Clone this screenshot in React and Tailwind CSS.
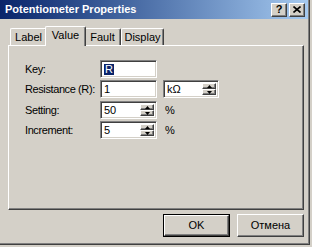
import React from 'react';

// Win2k-style "Potentiometer Properties" dialog

const raised =
  'border border-t-white border-l-white border-r-[#404040] border-b-[#404040] shadow-[inset_-1px_-1px_0_#808080,inset_1px_1px_0_#d4d0c8]';
const sunken =
  'border border-t-[#808080] border-l-[#808080] border-r-white border-b-white shadow-[inset_1px_1px_0_#404040,inset_-1px_-1px_0_#d4d0c8]';

function Arrow({ up }) {
  return (
    <svg width="5" height="3" viewBox="0 0 5 3" className="block">
      <path d={up ? 'M2.5 0 L5 3 L0 3 Z' : 'M0 0 L5 0 L2.5 3 Z'} fill="#000" />
    </svg>
  );
}

function Spinner() {
  return (
    <div className="flex h-full w-[14px] shrink-0 flex-col">
      <div className={`flex h-[7px] items-center justify-center bg-[#d4d0c8] ${raised}`}>
        <Arrow up />
      </div>
      <div className={`flex h-[7px] items-center justify-center bg-[#d4d0c8] ${raised}`}>
        <Arrow />
      </div>
    </div>
  );
}

function Field({ children, spin, className = '' }) {
  return (
    <div className={`flex h-[18px] items-stretch bg-white p-[2px] ${sunken} ${className}`}>
      <div className="flex flex-1 items-center pl-[1px] leading-none">{children}</div>
      {spin && <Spinner />}
    </div>
  );
}

function Row({ label, children, className = '' }) {
  return (
    <div className={`flex items-center ${className}`}>
      <span className="w-[75px] shrink-0 whitespace-nowrap tracking-[-0.4px]">{label}</span>
      {children}
    </div>
  );
}

const tabs = [
  { name: 'Label', w: 'w-[37px]' },
  { name: 'Value', w: 'w-[41px]', active: true },
  { name: 'Fault', w: 'w-[37px]' },
  { name: 'Display', w: 'w-[43px]' },
];

export default function App() {
  return (
    <div className="h-[247px] w-[312px] overflow-hidden bg-[#d4d0c8] font-['Liberation_Sans',Arial,sans-serif] text-[11px] text-black">
      <div className="flex h-[245px] w-[310px] flex-col border-r border-b border-[#404040] pr-[1px] shadow-[inset_-1px_-1px_0_#808080]">
        {/* title bar */}
        <div className="flex h-[19px] items-center bg-gradient-to-r from-[#0a246a] to-[#a6caf0] pl-[5px] pr-[3px]">
          <span className="flex-1 text-[11px] font-bold text-white">Potentiometer Properties</span>
          <div className={`flex h-[14px] w-[16px] items-center justify-center bg-[#d4d0c8] text-[11px] font-bold leading-none ${raised}`}>?</div>
          <div className={`ml-[2px] flex h-[14px] w-[16px] items-center justify-center bg-[#d4d0c8] ${raised}`}>
            <svg width="8" height="7" viewBox="0 0 8 7">
              <path d="M0.5 0.5 L7.5 6.5 M7.5 0.5 L0.5 6.5" stroke="#000" strokeWidth="1.6" />
            </svg>
          </div>
        </div>

        {/* tabs */}
        <div className="mt-[8px] flex h-[18px] items-end pl-[10px]">
          {tabs.map((t) =>
            t.active ? (
              <div
                key={t.name}
                className={`relative z-10 -mx-[2px] -mb-[1px] flex h-[20px] ${t.w} items-center justify-center rounded-t-[2px] border border-b-0 border-t-white border-l-white border-r-[#404040] bg-[#d4d0c8] pb-[2px] shadow-[inset_-1px_0_0_#808080]`}
              >
                {t.name}
              </div>
            ) : (
              <div
                key={t.name}
                className={`flex h-[17px] ${t.w} items-center justify-center rounded-t-[2px] border border-b-0 border-t-white border-l-white border-r-[#404040] pt-[1px] shadow-[inset_-1px_0_0_#808080]`}
              >
                {t.name}
              </div>
            )
          )}
        </div>

        {/* tab panel */}
        <div className="ml-[8px] flex h-[165px] w-[296px] flex-col border border-t-white border-l-white border-r-[#404040] border-b-[#404040] pt-[14px] pl-[16px] shadow-[inset_-1px_-1px_0_#808080]">
          <Row label="Key:">
            <Field className="w-[57px]">
              <span className="bg-[#0a246a] px-[1px] text-white">R</span>
            </Field>
          </Row>
          <Row label="Resistance (R):" className="mt-[2px]">
            <Field className="w-[57px]">1</Field>
            <Field spin className="ml-[6px] w-[56px]">
              kΩ
            </Field>
          </Row>
          <Row label="Setting:" className="mt-[3px]">
            <Field spin className="w-[57px]">
              50
            </Field>
            <span className="ml-[8px]">%</span>
          </Row>
          <Row label="Increment:" className="mt-[2px]">
            <Field spin className="w-[57px]">
              5
            </Field>
            <span className="ml-[8px]">%</span>
          </Row>
        </div>

        {/* buttons */}
        <div className="mt-[4px] flex justify-end gap-[7px] pr-[4px]">
          <div className="border border-black">
            <div className={`flex h-[21px] w-[65px] items-center justify-center bg-[#d4d0c8] ${raised}`}>OK</div>
          </div>
          <div className={`flex h-[23px] w-[67px] items-center justify-center bg-[#d4d0c8] ${raised}`}>Отмена</div>
        </div>
      </div>
    </div>
  );
}
